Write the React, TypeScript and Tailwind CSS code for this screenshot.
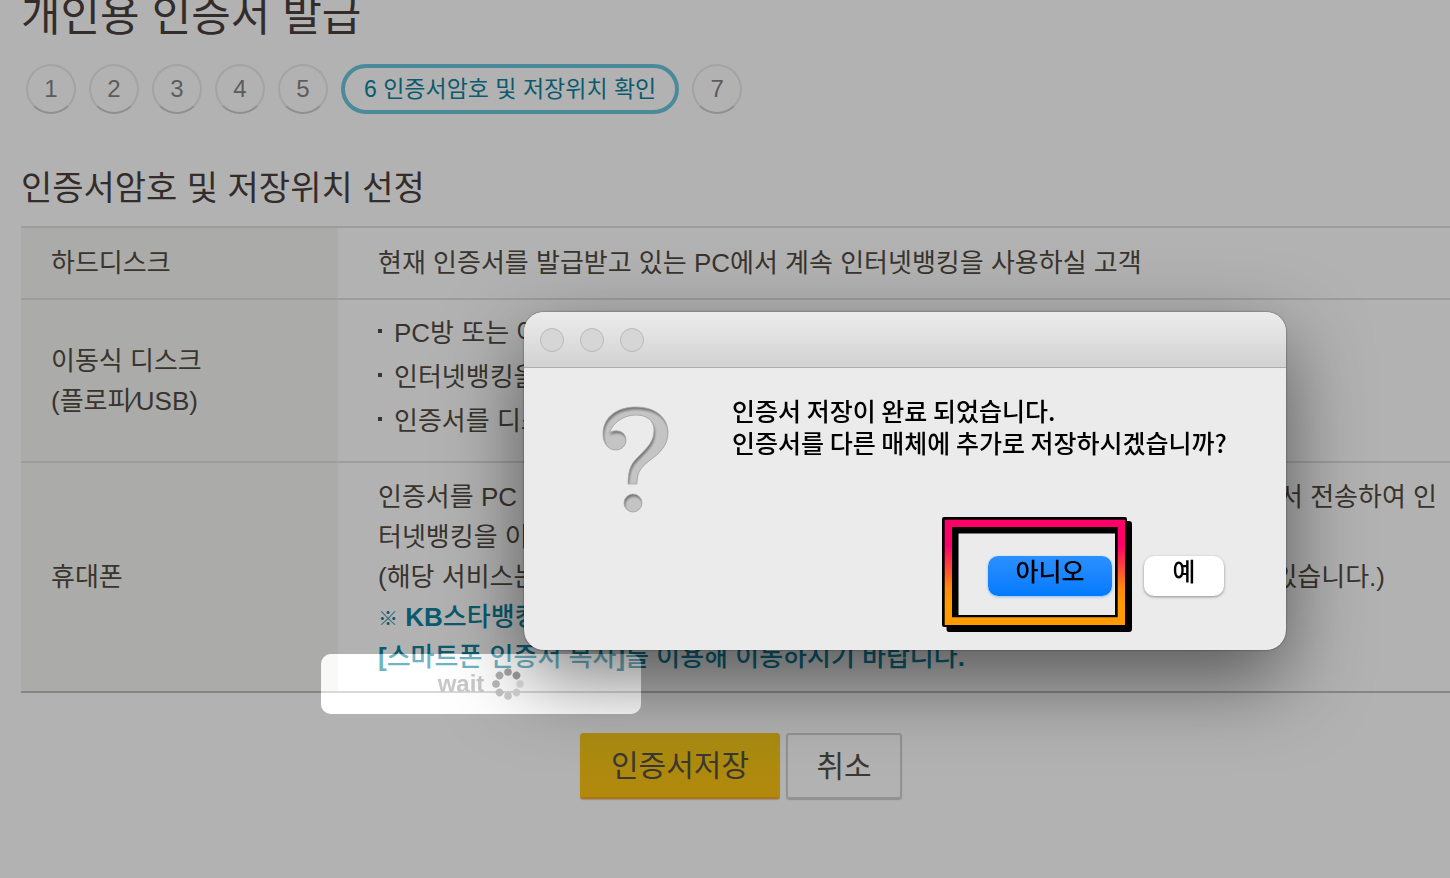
import { ReactNode } from "react";

const pageFont = "font-['Liberation_Sans','Noto_Sans_CJK_KR',sans-serif]";
const dialogFont = "font-['Noto_Sans_CJK_KR',sans-serif]";

function StepCircle({ children }: { children: ReactNode }) {
  return (
    <li className="flex size-[50px] items-center justify-center rounded-full border-2 border-[#a3a3a3] border-b-[#8f8f8f] text-2xl text-[#5c5c5c]">
      {children}
    </li>
  );
}

function Steps() {
  return (
    <ol className="flex gap-[13px] pl-[5px]">
      {[1, 2, 3, 4, 5].map((n) => (
        <StepCircle key={n}>{n}</StepCircle>
      ))}
      <li
        aria-current="step"
        className="flex h-[50px] items-center rounded-full border-4 border-[#4a8a9b] px-[19px] text-[23px] text-[#0b5a6e]"
      >
        6 인증서암호 및 저장위치 확인
      </li>
      <StepCircle>7</StepCircle>
    </ol>
  );
}

function Row({ label, children }: { label: ReactNode; children: ReactNode }) {
  return (
    <tr className="border-y-2 border-[#9d9d9d] last:border-b-[#868686]">
      <th scope="row" className="w-[317px] bg-[#ababa9] pl-[30px] text-left font-normal">
        {label}
      </th>
      <td className="pl-10">{children}</td>
    </tr>
  );
}

function StorageTable() {
  return (
    <table className="w-full border-collapse text-[26px] leading-10 text-[#39342d]">
      <tbody>
        <Row label="하드디스크">
          <p className="py-[15px]">현재 인증서를 발급받고 있는 PC에서 계속 인터넷뱅킹을 사용하실 고객</p>
        </Row>
        <Row
          label={
            <>
              이동식 디스크
              <br />
              (플로피⁄USB)
            </>
          }
        >
          <ul className="pb-[18px] pt-[11px] leading-[44px]">
            {["PC방 또는 여", "인터넷뱅킹을", "인증서를 디스"].map((text) => (
              <li key={text} className="flex items-center gap-3">
                <span className="mb-1 size-1 bg-[#39342d]" />
                {text}
              </li>
            ))}
          </ul>
        </Row>
        <Row label="휴대폰">
          <div className="py-[14px]">
            <p className="flex justify-between pr-6">
              <span>인증서를 PC 또</span>
              <span>서 전송하여 인</span>
            </p>
            <p>터넷뱅킹을 이</p>
            <p className="flex justify-between pr-[76px]">
              <span>(해당 서비스는</span>
              <span>있습니다.)</span>
            </p>
            <p className="font-medium text-[#0b5a6e]">
              <b className="text-xl">※</b> <b>KB</b>스타뱅킹
              <br />
              <b>[</b>스마트폰 인증서 복사<b>]</b>를 이용해 이동하시기 바랍니다<b>.</b>
            </p>
          </div>
        </Row>
      </tbody>
    </table>
  );
}

const dots = ["#a9a9a9", "#a0a0a0", "#e0e0e0", "#d8d8d8", "#cfcfcf", "#c4c4c4", "#bababa", "#b2b2b2"];

function WaitBox() {
  return (
    <div
      role="status"
      className="absolute left-[321px] top-[654px] flex h-[60px] w-80 items-center justify-center gap-2 rounded-[10px] bg-white/40 text-2xl font-bold text-[#c9c9c9] backdrop-brightness-[1.43]"
    >
      wait
      <svg viewBox="-16 -16 32 32" className="size-8">
        {dots.map((fill, i) => (
          <circle key={i} cy="-12" r="3.8" fill={fill} transform={`rotate(${i * 45})`} />
        ))}
      </svg>
    </div>
  );
}

const hook =
  "M28 79C28 62 33 57 39 51C48 42 54 36 54 25C54 15 46 10 36 10C25 10 14 16 9 28C14 24 26 25 26 35C26 41 21 45 16 45C8 45 3 38 3 29C3 12 17 2 36 2C55 2 68 12 68 28C68 42 57 50 49 56C40 63 37 68 37 79Z";

function QuestionIcon() {
  return (
    <svg viewBox="0 0 70 110" className="h-[110px] w-[70px]" aria-hidden="true">
      <defs>
        <clipPath id="mark">
          <path d={hook} />
          <circle cx="33" cy="98" r="9" />
        </clipPath>
        <filter id="soft">
          <feGaussianBlur stdDeviation="0.8" />
        </filter>
      </defs>
      <g clipPath="url(#mark)">
        <rect width="70" height="110" fill="#757575" />
        <g fill="#c4c4c4" transform="translate(1 2.5)" filter="url(#soft)">
          <path d={hook} />
          <circle cx="33" cy="98" r="9" />
        </g>
      </g>
      <path d={hook} fill="none" stroke="#a8a8a8" strokeWidth="0.8" />
      <circle cx="33" cy="98" r="9" fill="none" stroke="#a8a8a8" strokeWidth="0.8" />
    </svg>
  );
}

function HighlightFrame() {
  return (
    <svg viewBox="0 0 190 115" className="pointer-events-none absolute left-[418px] top-[205px] h-[115px] w-[190px]" aria-hidden="true">
      <defs>
        <linearGradient id="frame" x1="0" y1="0" x2="0" y2="1">
          <stop offset="0.25" stopColor="#ff0069" />
          <stop offset="0.65" stopColor="#ff8a0a" />
          <stop offset="0.8" stopColor="#ff9b00" />
        </linearGradient>
      </defs>
      <path
        fillRule="evenodd"
        d="M2 0H183Q185 0 185 2V4H187Q190 4 190 7V112Q190 115 187 115H7Q4.500 115 4.500 112V110H2Q0 110 0 108V2Q0 0 2 0ZM16.500 16.500V98H173V16.500Z"
      />
      <path fill="url(#frame)" fillRule="evenodd" d="M2.700 2.700H183V108H2.700ZM10 10V100.300H175.700V10Z" />
    </svg>
  );
}

function SaveDialog() {
  return (
    <div
      role="dialog"
      aria-labelledby="save-message"
      className={`absolute left-[524px] top-[312px] w-[762px] rounded-[20px] bg-[#ebebeb] shadow-[0_0_2px_rgba(0,0,0,0.6),0_30px_80px_rgba(0,0,0,0.5)] ${dialogFont}`}
    >
      <div className="flex h-14 items-center gap-4 rounded-t-[20px] border-b border-[#aeaeae] bg-linear-to-b from-[#ececec] to-[#d2d2d2] px-4">
        {["닫기", "최소화", "확대"].map((name) => (
          <button key={name} aria-label={name} className="size-6 rounded-full border border-[#b8b8b8] bg-[#d6d6d6]" />
        ))}
      </div>
      <div className="flex items-start gap-[62px] pl-[76px] pt-[26px]">
        <div className="pt-[11px]">
          <QuestionIcon />
        </div>
        <p id="save-message" className="text-[25px] font-medium leading-8 text-black">
          인증서 저장이 완료 되었습니다.
          <br />
          인증서를 다른 매체에 추가로 저장하시겠습니까?
        </p>
      </div>
      <div className="flex justify-end gap-8 pb-[54px] pr-[62px] pt-[41px] text-[25px] font-medium leading-7 text-black">
        <button className="h-10 w-[124px] rounded-[10px] bg-linear-to-b from-[#2b90ff] to-[#007aff] pb-3 shadow-[0_1px_3px_rgba(0,122,255,0.4)]">
          아니오
        </button>
        <button className="h-10 w-20 rounded-[10px] bg-white pb-3 shadow-[0_1px_3px_rgba(0,0,0,0.4)]">예</button>
      </div>
      <HighlightFrame />
    </div>
  );
}

export default function App() {
  return (
    <div className={`relative min-h-screen overflow-hidden bg-[#b2b2b2] ${pageFont}`}>
      <main className="-mr-[11px] pl-[21px]">
        <h1 className="text-[43px] leading-8 text-[#332c2a]">개인용 인증서 발급</h1>
        <div className="pt-8">
          <Steps />
        </div>
        <h2 className="pb-[18px] pt-[54px] text-[34px] leading-10 text-[#332c2a]">인증서암호 및 저장위치 선정</h2>
        <StorageTable />
        <div className="flex justify-center gap-[6px] pt-10 text-[30px] text-[#3b3832]">
          <button className="h-[66px] w-[200px] rounded-[3px] border-b-2 border-[#b3730c] bg-linear-to-b from-[#ab8c12] to-[#b1890c] shadow-[0_1px_1px_rgba(0,0,0,0.2)]">
            인증서저장
          </button>
          <button className="h-[66px] w-[116px] rounded-[3px] border-2 border-[#929292] shadow-[0_1px_1px_rgba(0,0,0,0.2)]">
            취소
          </button>
        </div>
      </main>
      <WaitBox />
      <SaveDialog />
    </div>
  );
}
